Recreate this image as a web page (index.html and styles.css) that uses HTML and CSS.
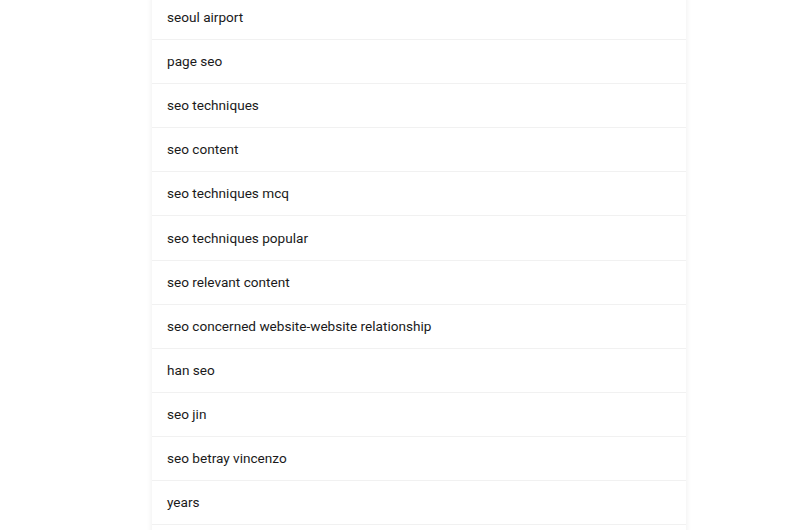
FILE: index.html
```html
<!DOCTYPE html>
<html lang="en">
<head>
    <meta charset="UTF-8">
    <meta name="viewport" content="width=device-width, initial-scale=1.0">
    <title>Suggestions</title>
    <link rel="stylesheet" href="styles.css">
</head>
<body>
    <div class="suggestions">
        <div class="item">seoul airport</div>
        <div class="item">page seo</div>
        <div class="item">seo techniques</div>
        <div class="item">seo content</div>
        <div class="item">seo techniques mcq</div>
        <div class="item">seo techniques popular</div>
        <div class="item">seo relevant content</div>
        <div class="item">seo concerned website-website relationship</div>
        <div class="item">han seo</div>
        <div class="item">seo jin</div>
        <div class="item">seo betray vincenzo</div>
        <div class="item">years</div>
    </div>
</body>
</html>
```

FILE: styles.css
```css
body{
    margin: 0;
    background-color: #ffffff;
    font-family: Roboto, "Liberation Sans", sans-serif;
    overflow: hidden;
}
.suggestions{
    width: 534px;
    margin-left: 152px;
    margin-top: -4px;
    padding-bottom: 20px;
    background-color: #ffffff;
    box-shadow: 0 0 6px rgba(0, 0, 0, 0.08);
}
.item{
    height: 44.1px;
    box-sizing: border-box;
    padding: 0 15px 1px;
    display: flex;
    align-items: center;
    font-size: 13.6px;
    color: #1a1a1a;
    border-bottom: 1px solid #f1f1f1;
}
```
